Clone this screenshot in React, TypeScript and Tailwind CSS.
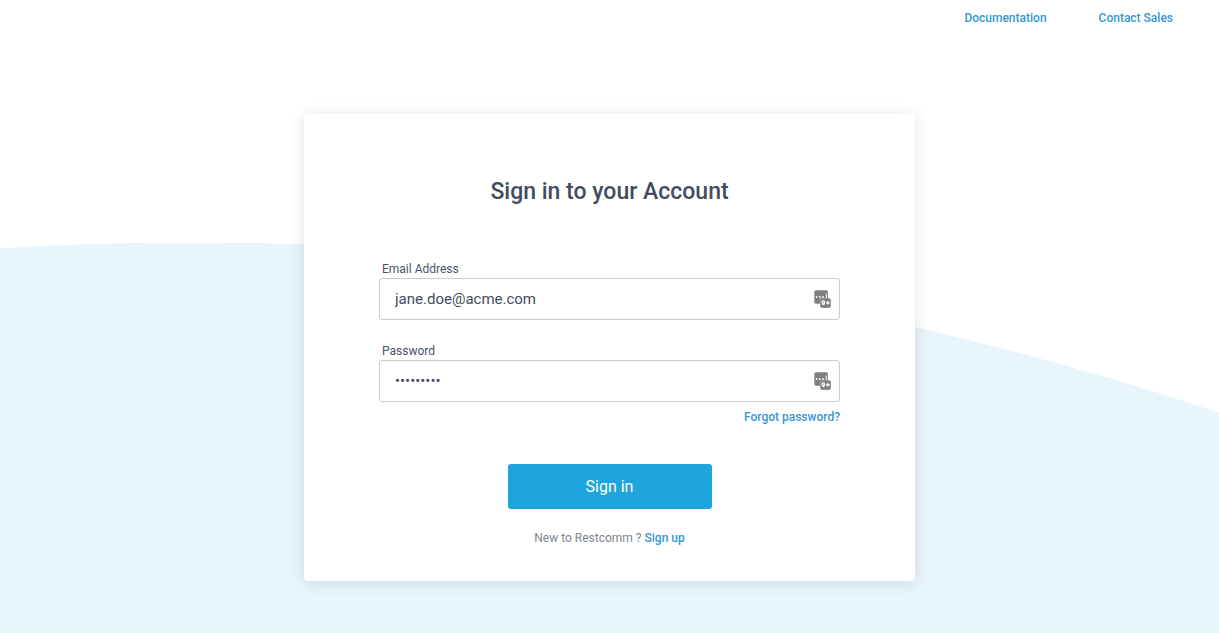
import { useState } from 'react';

const linkClass = 'font-medium text-[#3597d3] hover:underline';

function KeyManagerIcon() {
  return (
    <svg
      viewBox="0 0 17 18"
      aria-hidden="true"
      className="pointer-events-none absolute top-1/2 right-[9px] h-[18px] w-[17px] -translate-y-1/2"
    >
      <rect x="0.3" y="0.3" width="13.6" height="13.4" rx="1.6" fill="#7f7f7f" />
      <rect x="5.9" y="8.1" width="10.8" height="9.6" rx="2" fill="#b4b4b4" />
      <rect x="6.5" y="8.6" width="10.2" height="9.1" rx="1.8" fill="#7f7f7f" />
      <circle cx="2.6" cy="7" r="0.9" fill="#ffffff" />
      <circle cx="5.8" cy="7" r="0.9" fill="#ffffff" />
      <circle cx="9" cy="7" r="0.9" fill="#ffffff" />
      <path d="M12.3 3.6V8" stroke="#ffffff" strokeWidth="1" />
      <circle cx="9.3" cy="12.1" r="1.3" fill="none" stroke="#ffffff" strokeWidth="1.2" />
      <path d="M10.6 12.1V13.2Q10.4 14.8 8.3 14.7" fill="none" stroke="#ffffff" strokeWidth="1.2" />
      <path d="M12 12.8H15.8M13.9 11V14.6" stroke="#ffffff" strokeWidth="1.3" />
    </svg>
  );
}

type FieldProps = {
  id: string;
  label: string;
  type: string;
  value: string;
  onChange: (value: string) => void;
};

function Field({ id, label, type, value, onChange }: FieldProps) {
  return (
    <div className="flex flex-col">
      <label htmlFor={id} className="pl-[3px] text-xs leading-[18px] text-[#4a5266]">
        {label}
      </label>
      <div className="relative">
        <input
          id={id}
          type={type}
          value={value}
          onChange={(event) => onChange(event.target.value)}
          className="h-[42px] w-full rounded-[3px] border border-[#cccccc] bg-white pr-10 pl-[15px] text-[15px] text-[#444c60] outline-none focus:border-[#1fa5dd]"
        />
        <KeyManagerIcon />
      </div>
    </div>
  );
}

export default function App() {
  const [email, setEmail] = useState('jane.doe@acme.com');
  const [password, setPassword] = useState('acmepass1');

  return (
    <div className="relative isolate min-h-screen bg-white font-[Roboto,sans-serif]">
      <svg
        viewBox="0 0 1219 633"
        preserveAspectRatio="none"
        aria-hidden="true"
        className="absolute inset-0 -z-10 h-full w-full"
      >
        <path d="M0 248.3Q609.5 211 1219 412.5V633H0Z" fill="#e8f5fb" />
      </svg>

      <nav className="flex justify-end gap-[52px] pt-[9px] pr-[46px] text-xs leading-[18px]">
        <a href="#documentation" className={linkClass}>
          Documentation
        </a>
        <a href="#sales" className={linkClass}>
          Contact Sales
        </a>
      </nav>

      <main className="px-4 pt-[87px] pb-[51px]">
        <div className="mx-auto max-w-[611px] rounded-[4px] bg-white px-[75px] pt-[62px] pb-[34px] shadow-[0_2px_16px_rgba(0,0,0,0.12)]">
          <h1 className="text-center text-[23px] leading-8 font-medium text-[#444c60]">
            Sign in to your Account
          </h1>

          <form className="mt-[52px] flex flex-col" onSubmit={(event) => event.preventDefault()}>
            <div className="flex flex-col gap-[22px]">
              <Field id="email" label="Email Address" type="email" value={email} onChange={setEmail} />
              <Field id="password" label="Password" type="password" value={password} onChange={setPassword} />
            </div>
            <a href="#forgot" className={`mt-[6px] self-end text-xs leading-[18px] ${linkClass}`}>
              Forgot password?
            </a>
            <button
              type="submit"
              className="mt-[38px] h-[45px] w-[204px] self-center rounded-[3px] bg-[#1fa5dd] text-base text-white hover:bg-[#1b97cb]"
            >
              Sign in
            </button>
          </form>

          <p className="mt-5 text-center text-xs leading-[18px] text-[#80858f]">
            New to Restcomm ?{' '}
            <a href="#signup" className={linkClass}>
              Sign up
            </a>
          </p>
        </div>
      </main>
    </div>
  );
}
